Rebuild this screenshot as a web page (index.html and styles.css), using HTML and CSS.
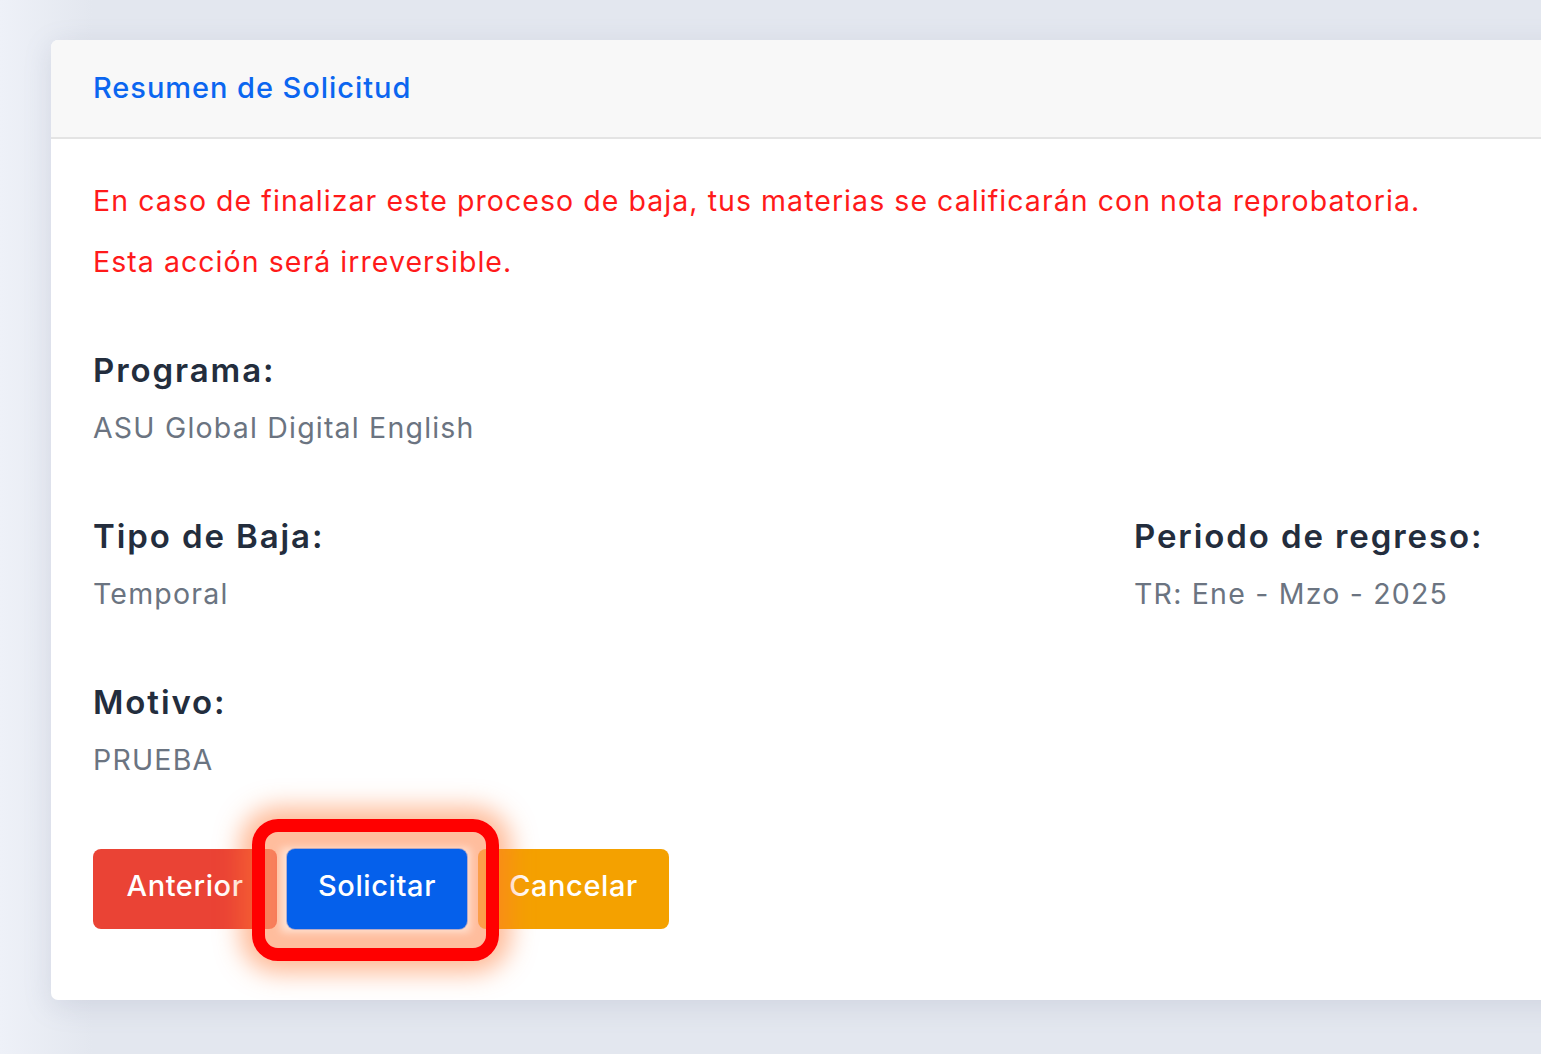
FILE: index.html
```html
<!DOCTYPE html>
<html lang="es">
<head>
<meta charset="utf-8">
<title>Resumen de Solicitud</title>
<link rel="stylesheet" href="styles.css">
</head>
<body>
<main class="page">
  <section class="card">
    <header class="card-header">
      <h2 class="card-title">Resumen de Solicitud</h2>
    </header>
    <div class="card-body">
      <p class="warning">En caso de finalizar este proceso de baja, tus materias se calificarán con nota reprobatoria.</p>
      <p class="warning">Esta acción será irreversible.</p>

      <div class="field">
        <h3 class="label">Programa:</h3>
        <p class="value">ASU Global Digital English</p>
      </div>

      <div class="row">
        <div class="field">
          <h3 class="label">Tipo de Baja:</h3>
          <p class="value">Temporal</p>
        </div>
        <div class="field">
          <h3 class="label">Periodo de regreso:</h3>
          <p class="value">TR: Ene - Mzo - 2025</p>
        </div>
      </div>

      <div class="field">
        <h3 class="label">Motivo:</h3>
        <p class="value">PRUEBA</p>
      </div>

      <div class="actions">
        <button class="btn btn-prev">Anterior</button>
        <div class="highlight-wrap">
          <button class="btn btn-submit">Solicitar</button>
          <span class="highlight"></span>
        </div>
        <button class="btn btn-cancel">Cancelar</button>
      </div>
    </div>
  </section>
</main>
</body>
</html>
```

FILE: styles.css
```css
html, body {
  margin: 0;
  padding: 0;
  height: 100%;
  overflow: hidden;
}

body {
  background: linear-gradient(90deg, #eef1f8 0%, #e3e7ef 6%, #e3e7ef 100%);
  font-family: Inter, "Open Sans", "Liberation Sans", sans-serif;
}

.page {
  padding: 40px 0 0 51px;
}

.card {
  width: 2170px;
  background: #ffffff;
  border-radius: 7px;
  box-shadow: 0 6px 28px rgba(120, 130, 160, 0.18);
}

.card-header {
  height: 97px;
  display: flex;
  align-items: center;
  padding-left: 42px;
  background: #f8f8f8;
  border-bottom: 2px solid #e4e4e4;
  border-radius: 7px 7px 0 0;
}

.card-title {
  margin: 0 0 2px;
  font-size: 29px;
  font-weight: 500;
  color: #0b66f0;
  letter-spacing: 0.95px;
}

.card-body {
  padding: 31px 42px 71px;
}

.warning {
  margin: 0;
  font-size: 28.5px;
  line-height: 61px;
  color: #ff1a1a;
  font-weight: 400;
  letter-spacing: 1.05px;
}

.field {
  margin-top: 56px;
}

.row {
  display: grid;
  grid-template-columns: 1041px 1fr;
}

.row + .field,
.field + .row {
  margin-top: 66px;
}

.row .field {
  margin-top: 0;
}

.label {
  margin: 0;
  font-size: 33px;
  line-height: 44px;
  font-weight: 600;
  color: #232d3d;
  letter-spacing: 1.9px;
}

.value {
  margin: 16px 0 0;
  font-size: 28.5px;
  line-height: 40px;
  color: #6b7481;
  letter-spacing: 1.2px;
}

.actions {
  margin-top: 69px;
  display: flex;
  align-items: center;
}

.btn {
  height: 80px;
  border: none;
  border-radius: 8px;
  color: #ffffff;
  font-family: inherit;
  font-size: 29px;
  font-weight: 500;
  letter-spacing: 0.6px;
  padding: 0 0 8px;
}

.btn-prev {
  width: 184px;
  background: #ea4335;
}

.btn-submit {
  position: relative;
  z-index: 2;
  width: 180px;
  background: #0560eb;
  box-shadow: 0 0 0 1px rgba(40, 80, 200, 0.35);
}

.btn-cancel {
  width: 191px;
  margin-left: 11px;
  background: #f4a100;
}

.highlight-wrap {
  position: relative;
  margin-left: 10px;
  display: flex;
}

.highlight {
  position: absolute;
  z-index: 1;
  left: -35px;
  top: -30px;
  width: 221px;
  height: 116px;
  border: 13px solid #ff0000;
  border-radius: 26px;
  background: rgba(255, 180, 140, 0.35);
  box-shadow: 0 0 24px 12px rgba(255, 120, 50, 0.5), inset 0 0 8px 16px rgba(255, 150, 100, 0.5);
  pointer-events: none;
}
```
